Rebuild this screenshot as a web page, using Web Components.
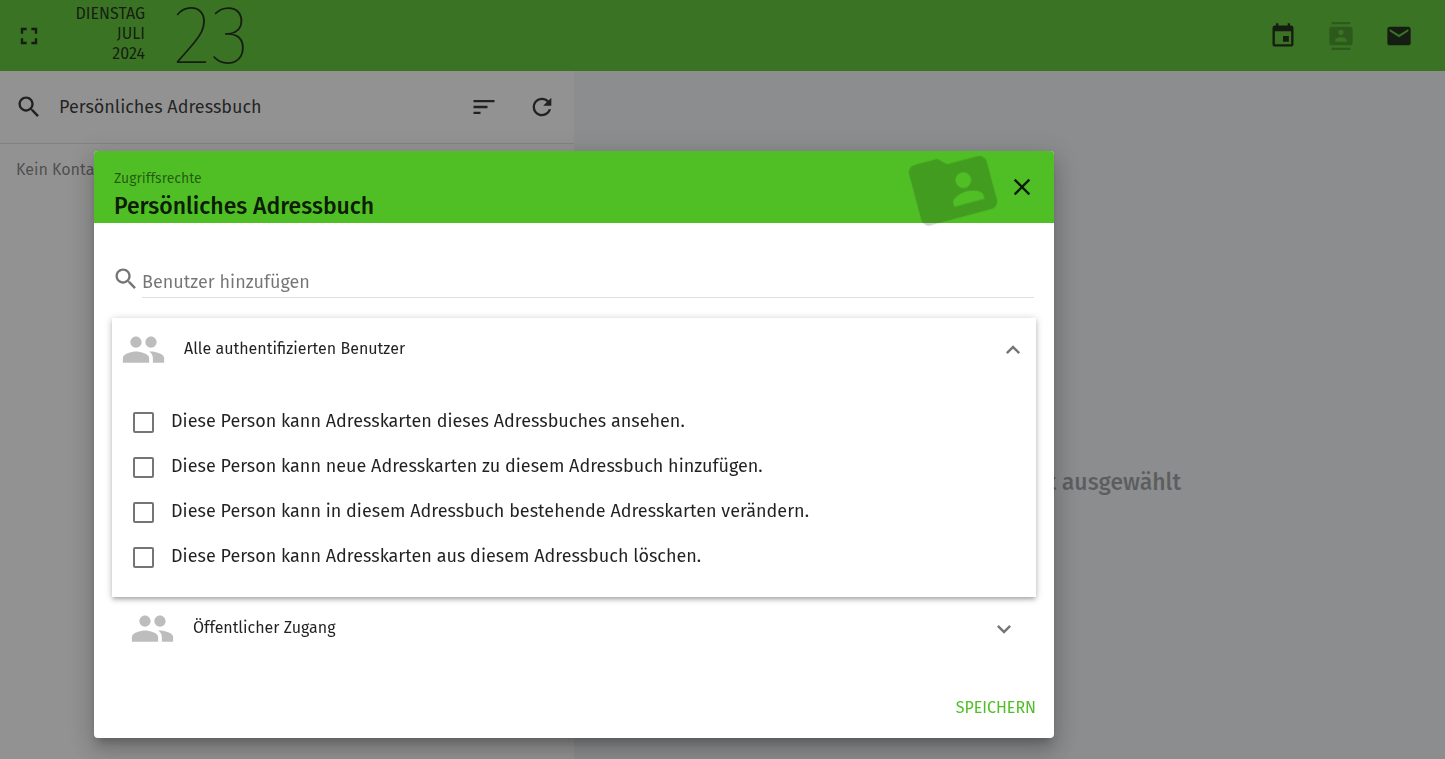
<!DOCTYPE html>
<html lang="de">
<head>
<meta charset="utf-8">
<meta name="viewport" content="width=device-width, initial-scale=1">
<title>Persönliches Adressbuch – Zugriffsrechte</title>
<style>
  html, body { height: 100%; }
  body {
    margin: 0;
    font-family: "Fira Sans", "Noto Sans", sans-serif;
    font-size: 16px;
    color: rgba(0, 0, 0, .87);
    --green: #4fbf25;
    --body: 18px;
    --small: 16px;
  }
</style>
</head>
<body>
<address-app></address-app>

<script>
const ICONS = {
  fullscreen: 'M7 14H5v5h5v-2H7v-3zm-2-4h2V7h3V5H5v5zm12 7h-3v2h5v-5h-2v3zM14 5v2h3v3h2V5h-5z',
  search: 'M15.5 14h-.79l-.28-.27C15.41 12.59 16 11.11 16 9.5 16 5.91 13.09 3 9.5 3S3 5.91 3 9.5 5.91 16 9.5 16c1.61 0 3.09-.59 4.23-1.57l.27.28v.79l5 4.99L20.49 19l-4.99-5zm-6 0C7.01 14 5 11.99 5 9.5S7.01 5 9.5 5 14 7.01 14 9.5 11.99 14 9.5 14z',
  event: 'M17 12h-5v5h5v-5zM16 1v2H8V1H6v2H5c-1.11 0-1.99.9-1.99 2L3 19c0 1.1.89 2 2 2h14c1.1 0 2-.9 2-2V5c0-1.1-.9-2-2-2h-1V1h-2zm3 18H5V8h14v11z',
  contacts: 'M20 0H4v2h16V0zM4 24h16v-2H4v2zM20 4H4c-1.1 0-2 .9-2 2v12c0 1.1.9 2 2 2h16c1.1 0 2-.9 2-2V6c0-1.1-.9-2-2-2zm-8 2.75c1.24 0 2.25 1.01 2.25 2.25s-1.01 2.25-2.25 2.25S9.75 10.24 9.75 9 10.76 6.75 12 6.75zM17 17H7v-1.5c0-1.67 3.33-2.5 5-2.5s5 .83 5 2.5V17z',
  email: 'M20 4H4c-1.1 0-1.99.9-1.99 2L2 18c0 1.1.9 2 2 2h16c1.1 0 2-.9 2-2V6c0-1.1-.9-2-2-2zm0 4l-8 5-8-5V6l8 5 8-5v2z',
  sort: 'M3 18h6v-2H3v2zM3 6v2h18V6H3zm0 7h12v-2H3v2z',
  refresh: 'M17.65 6.35C16.2 4.9 14.21 4 12 4c-4.42 0-7.99 3.58-7.99 8s3.57 8 7.99 8c3.73 0 6.84-2.55 7.73-6h-2.08c-.82 2.33-3.04 4-5.65 4-3.31 0-6-2.69-6-6s2.69-6 6-6c1.66 0 3.14.69 4.22 1.78L13 11h7V4l-2.35 2.35z',
  close: 'M19 6.41L17.59 5 12 10.59 6.41 5 5 6.41 10.59 12 5 17.59 6.41 19 12 13.41 17.59 19 19 17.59 13.41 12z',
  folder: 'M20 6h-8l-2-2H4c-1.1 0-1.99.9-1.99 2L2 18c0 1.1.9 2 2 2h16c1.1 0 2-.9 2-2V8c0-1.1-.9-2-2-2zm-5 3c1.1 0 2 .9 2 2s-.9 2-2 2-2-.9-2-2 .9-2 2-2zm4 8h-8v-1c0-1.33 2.67-2 4-2s4 .67 4 2v1z',
  people: 'M16 11c1.66 0 2.99-1.34 2.99-3S17.66 5 16 5c-1.66 0-3 1.34-3 3s1.34 3 3 3zm-8 0c1.66 0 2.99-1.34 2.99-3S9.66 5 8 5C6.34 5 5 6.34 5 8s1.34 3 3 3zm0 2c-2.33 0-7 1.17-7 3.5V19h14v-2.5c0-2.33-4.67-3.5-7-3.5zm8 0c-.29 0-.62.02-.97.05 1.16.84 1.97 1.97 1.97 3.45V19h6v-2.5c0-2.33-4.67-3.5-7-3.5z',
  more: 'M16.59 8.59L12 13.17 7.41 8.59 6 10l6 6 6-6z',
  less: 'M12 8l-6 6 1.41 1.41L12 10.83l4.59 4.58L18 14z'
};

const define = (name, render) => customElements.define(name, class extends HTMLElement {
  connectedCallback() {
    if (this.shadowRoot) return;
    this.attachShadow({ mode: 'open' }).innerHTML = render(this);
  }
});

define('app-icon', el => `
  <style>
    :host { display: block; flex: none; width: 28px; height: 28px; }
    svg { display: block; width: 100%; height: 100%; fill: currentColor; }
  </style>
  <svg viewBox="0 0 24 24" aria-hidden="true"><path d="${ICONS[el.getAttribute('name')]}"/></svg>`);

define('icon-button', el => `
  <style>
    :host { display: block; flex: none; }
    button {
      display: grid; place-items: center; width: 46px; height: 46px;
      margin: 0; padding: 0; border: 0; border-radius: 50%;
      background: none; color: inherit; cursor: pointer;
    }
    button:disabled { opacity: .3; cursor: default; }
  </style>
  <button type="button" aria-label="${el.getAttribute('label')}" ${el.hasAttribute('disabled') ? 'disabled' : ''}>
    <app-icon name="${el.getAttribute('icon')}"></app-icon>
  </button>`);

define('top-bar', () => `
  <style>
    :host {
      display: flex; align-items: center; gap: 12px; box-sizing: border-box; height: 71px; flex: none;
      padding: 0 23px 0 6px; background: var(--green);
    }
    time { display: flex; align-items: center; gap: 28px; }
    .words {
      display: flex; flex-direction: column; min-width: 81px; padding-bottom: 4px;
      text-align: right; font-size: var(--small); line-height: 20px;
      text-transform: uppercase;
    }
    .day { font-weight: 100; font-size: 82px; line-height: 71px; }
    nav { display: flex; gap: 12px; margin-left: auto; }
  </style>
  <icon-button icon="fullscreen" label="Vollbild"></icon-button>
  <time datetime="2024-07-23">
    <span class="words"><span>Dienstag</span><span>Juli</span><span>2024</span></span>
    <span class="day">23</span>
  </time>
  <nav>
    <icon-button icon="event" label="Kalender"></icon-button>
    <icon-button icon="contacts" label="Adressbuch" disabled></icon-button>
    <icon-button icon="email" label="E-Mail"></icon-button>
  </nav>`);

define('contact-list', () => `
  <style>
    :host { display: flex; flex-direction: column; background: #fafafa; }
    header {
      display: flex; align-items: center; height: 72px;
      padding: 0 9px 0 6px; border-bottom: 1px solid rgba(0, 0, 0, .12);
    }
    h1 { flex: 1; margin: 0 0 0 7px; font-size: var(--body); font-weight: 400; line-height: 24px; }
    .tools { display: flex; gap: 12px; }
    p { margin: 0; padding: 14px 16px; font-size: var(--small); line-height: 24px; color: rgba(0, 0, 0, .54); }
  </style>
  <header>
    <icon-button icon="search" label="Suchen"></icon-button>
    <h1>Persönliches Adressbuch</h1>
    <div class="tools">
      <icon-button icon="sort" label="Sortieren"></icon-button>
      <icon-button icon="refresh" label="Aktualisieren"></icon-button>
    </div>
  </header>
  <p>Kein Kontakt</p>`);

define('detail-pane', () => `
  <style>
    :host {
      display: grid; place-items: center; padding: 134px 14px 0 0; box-sizing: border-box;
      background: #eceff1; color: rgba(0, 0, 0, .38);
    }
    p { margin: 0; font-size: 23px; font-weight: 500; line-height: 28px; }
  </style>
  <p>Es wurde kein Kontakt ausgewählt</p>`);

define('right-option', () => `
  <style>
    :host { display: block; }
    label { display: flex; align-items: center; gap: 17px; height: 45px; font-size: var(--body); cursor: pointer; }
    input {
      appearance: none; flex: none; box-sizing: border-box; width: 21px; height: 21px;
      margin: 3px 0 0; border: 2px solid rgba(0, 0, 0, .54); border-radius: 2px; background: #fff;
    }
    input:checked { background: var(--green); border-color: var(--green); }
  </style>
  <label><input type="checkbox"><span><slot></slot></span></label>`);

define('rights-panel', el => {
  const open = el.hasAttribute('open');
  return `
  <style>
    :host { display: block; }
    :host([open]) {
      background: #fff;
      box-shadow: 0 1px 8px rgba(0, 0, 0, .2), 0 3px 4px rgba(0, 0, 0, .14), 0 3px 3px -2px rgba(0, 0, 0, .12);
    }
    button {
      display: flex; align-items: center; gap: 18px; width: 100%; height: 63px;
      margin: 0; padding: 0 18px; border: 0; background: none;
      font: inherit; font-size: var(--small); color: inherit; text-align: left; cursor: pointer;
    }
    :host([open]) button { padding: 0 9px; }
    .people { width: 45px; height: 45px; color: rgba(0, 0, 0, .26); }
    .name { flex: 1; padding-bottom: 2px; }
    .chevron { color: rgba(0, 0, 0, .54); }
    .options { padding: 17px 21px 19px; }
    :host(:not([open])) .options { display: none; }
  </style>
  <button type="button" aria-expanded="${open}">
    <app-icon class="people" name="people"></app-icon>
    <span class="name">${el.getAttribute('label')}</span>
    <app-icon class="chevron" name="${open ? 'less' : 'more'}"></app-icon>
  </button>
  <div class="options"><slot></slot></div>`;
});

define('rights-dialog', () => `
  <style>
    :host {
      position: fixed; inset: 0; display: block; box-sizing: border-box;
      padding: 151px 94px 21px; background: rgba(33, 33, 33, .48);
    }
    dialog {
      position: static; display: flex; flex-direction: column; box-sizing: border-box;
      width: 100%; max-width: 960px; margin: 0; padding: 0; border: 0; border-radius: 4px;
      background: #fff; color: inherit;
      box-shadow: 0 7px 8px -4px rgba(0, 0, 0, .2), 0 13px 19px 2px rgba(0, 0, 0, .14), 0 5px 24px 4px rgba(0, 0, 0, .12);
    }
    header {
      position: relative; display: flex; align-items: center; height: 72px;
      padding: 0 9px 0 20px; border-radius: 4px 4px 0 0; background: var(--green);
    }
    .titles { flex: 1; padding-top: 12px; }
    .titles p { margin: 0; font-size: 14px; line-height: 26px; color: rgba(0, 0, 0, .54); }
    h2 { margin: 0; font-size: 23px; font-weight: 500; line-height: 28px; }
    .badge {
      position: absolute; top: -11px; right: 54px; width: 94px; height: 94px;
      transform: rotate(-15deg); color: rgba(0, 0, 0, .18); pointer-events: none;
    }
    .body { padding: 40px 18px 0; }
    .search { display: flex; align-items: flex-start; gap: 2px; padding-right: 2px; margin-bottom: 20px; }
    .search app-icon { margin-top: 2px; color: rgba(0, 0, 0, .54); }
    .search input {
      flex: 1; min-width: 0; height: 35px; box-sizing: border-box; margin: 0; padding: 4px 0 0;
      border: 0; border-bottom: 1px solid rgba(0, 0, 0, .12); outline: 0; background: none;
      font: inherit; font-size: var(--body); color: inherit;
    }
    .search input::placeholder { color: rgba(0, 0, 0, .54); opacity: 1; }
    footer { display: flex; justify-content: flex-end; padding: 29px 18px 13px; }
    .save {
      height: 36px; margin: 0; padding: 0; border: 0; background: none;
      font: inherit; font-size: var(--small); color: var(--green); text-transform: uppercase; cursor: pointer;
    }
  </style>
  <dialog open aria-labelledby="title">
    <header>
      <div class="titles">
        <p>Zugriffsrechte</p>
        <h2 id="title">Persönliches Adressbuch</h2>
      </div>
      <app-icon class="badge" name="folder"></app-icon>
      <icon-button icon="close" label="Schließen"></icon-button>
    </header>
    <div class="body">
      <div class="search">
        <app-icon name="search"></app-icon>
        <input type="text" placeholder="Benutzer hinzufügen" aria-label="Benutzer hinzufügen">
      </div>
      <rights-panel open label="Alle authentifizierten Benutzer">
        <right-option>Diese Person kann Adresskarten dieses Adressbuches ansehen.</right-option>
        <right-option>Diese Person kann neue Adresskarten zu diesem Adressbuch hinzufügen.</right-option>
        <right-option>Diese Person kann in diesem Adressbuch bestehende Adresskarten verändern.</right-option>
        <right-option>Diese Person kann Adresskarten aus diesem Adressbuch löschen.</right-option>
      </rights-panel>
      <rights-panel label="Öffentlicher Zugang"></rights-panel>
    </div>
    <footer><button class="save" type="button">Speichern</button></footer>
  </dialog>`);

define('address-app', () => `
  <style>
    :host { display: flex; flex-direction: column; min-height: 100vh; }
    main { flex: 1; display: grid; grid-template-columns: calc(40% - 4px) 1fr; }
  </style>
  <top-bar></top-bar>
  <main>
    <contact-list></contact-list>
    <detail-pane></detail-pane>
  </main>
  <rights-dialog></rights-dialog>`);
</script>
</body>
</html>
